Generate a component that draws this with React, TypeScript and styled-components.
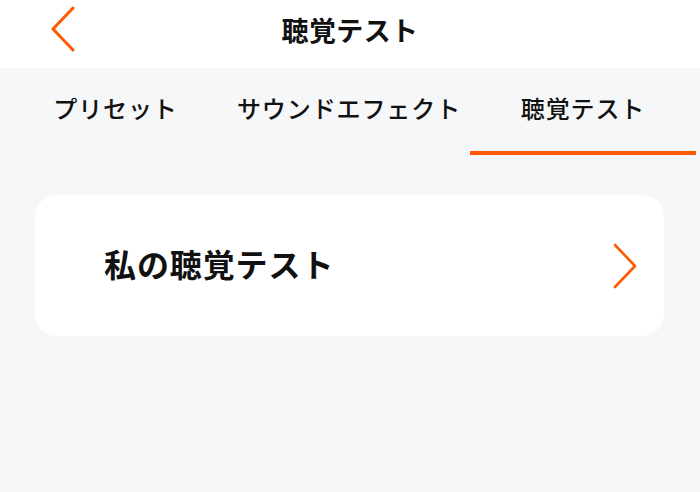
import React from 'react';
import styled, { createGlobalStyle } from 'styled-components';

const GlobalStyle = createGlobalStyle`
  html, body {
    margin: 0;
    padding: 0;
    background: #f6f7f9;
    font-family: "Noto Sans CJK JP", "Noto Sans", sans-serif;
  }
`;

const ORANGE = '#ff5a00';

const tabs = ['プリセット', 'サウンドエフェクト', '聴覚テスト'];

const App = () => {
  return (
    <>
      <GlobalStyle />
      <Page>
        <Header>
          <BackButton aria-label="戻る">
            <svg width="26" height="46" viewBox="0 0 26 46" fill="none">
              <path
                d="M23 2 L3 23 L23 44"
                stroke={ORANGE}
                strokeWidth="3"
                strokeLinecap="round"
                strokeLinejoin="round"
              />
            </svg>
          </BackButton>
          <Title>聴覚テスト</Title>
        </Header>
        <TabBar>
          {tabs.map((t, i) => (
            <Tab key={t} $active={i === 2}>
              {t}
            </Tab>
          ))}
        </TabBar>
        <Content>
          <Card>
            <CardLabel>私の聴覚テスト</CardLabel>
            <svg width="26" height="46" viewBox="0 0 26 46" fill="none">
              <path
                d="M3 2 L23 23 L3 44"
                stroke={ORANGE}
                strokeWidth="2.6"
                strokeLinecap="round"
                strokeLinejoin="round"
              />
            </svg>
          </Card>
        </Content>
      </Page>
    </>
  );
};

export default App;

const Page = styled.div`
  width: 700px;
  height: 492px;
  background: #f6f7f9;
  overflow: hidden;
`;

const Header = styled.header`
  position: relative;
  height: 68px;
  background: #ffffff;
  display: flex;
  align-items: center;
  justify-content: center;
`;

const BackButton = styled.button`
  position: absolute;
  left: 50px;
  top: 6px;
  padding: 0;
  border: none;
  background: none;
  display: flex;
`;

const Title = styled.h1`
  margin: 0;
  font-size: 27px;
  font-weight: 700;
  color: #111;
  letter-spacing: 0.4px;
  margin-top: -10px;
`;

const TabBar = styled.nav`
  display: grid;
  grid-template-columns: 225px 242px 226px;
  margin-left: 3px;
  height: 87px;
`;

const Tab = styled.div<{ $active: boolean }>`
  display: flex;
  justify-content: center;
  padding-top: 22px;
  box-sizing: border-box;
  height: 87px;
  font-size: 24px;
  font-weight: 500;
  color: #111;
  letter-spacing: 0.9px;
  border-bottom: 4px solid ${(p) => (p.$active ? ORANGE : 'transparent')};
`;

const Content = styled.main`
  padding: 40px 36px 0 35px;
`;

const Card = styled.div`
  height: 141px;
  background: #ffffff;
  border-radius: 22px;
  display: flex;
  align-items: center;
  justify-content: space-between;
  padding: 0 26px 0 69px;
`;

const CardLabel = styled.span`
  font-size: 32px;
  font-weight: 700;
  color: #111;
  letter-spacing: 0.9px;
  margin-top: -6px;
`;
